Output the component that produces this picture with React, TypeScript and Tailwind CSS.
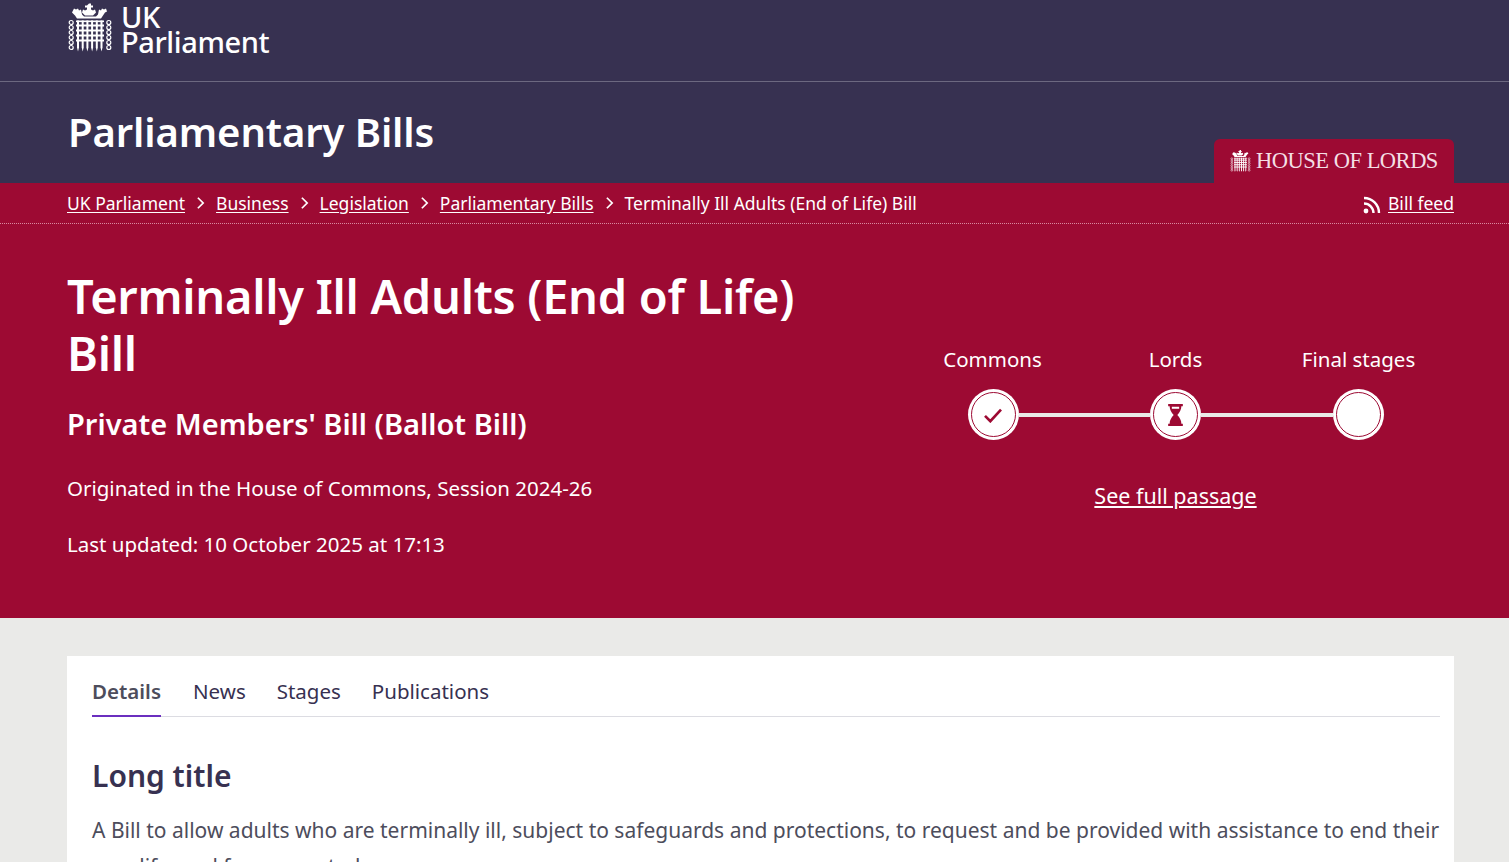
const portcullisBars = [0, 1, 2, 3, 4, 5];
function Logo({ className }: { className?: string }) {
  return (
    <svg viewBox="0 0 44 50" className={className} fill="#fff" aria-hidden="true">
      <path d="M21 0h2v2h2v2h-2v2l2 1 2-1 1 3-1 1-2 2h-8l-2-2-1-1 1-3 2 1 2-1V4h-2V2h2z" />
      <path d="M6 5l2 1 2-1 1 2 2-1 1 5 2 2h12l2-2 1-5 2 1 1-2 2 1 2-1 1 3-2 1-2 3-2 3H9l-2-3-3-3z" />
      <rect x="8" y="17" width="28" height="1.6" />
      <rect x="8" y="21" width="28" height="2" />
      <rect x="8" y="26" width="28" height="2" />
      <rect x="8" y="31" width="28" height="2" />
      <rect x="8" y="36" width="28" height="2" />
      {portcullisBars.map((i) => (
        <path key={i} d={`M${9 + i * 4.7} 17h2v27l-1 4-1-4z`} />
      ))}
      {[19, 24, 29, 34, 39, 44].map((y) => (
        <g key={y}>
          <circle cx="3.2" cy={y} r="2" fill="none" stroke="#fff" strokeWidth="1.2" />
          <circle cx="40.8" cy={y} r="2" fill="none" stroke="#fff" strokeWidth="1.2" />
        </g>
      ))}
    </svg>
  );
}

function Chevron() {
  return (
    <svg viewBox="0 0 10 16" className="w-[9px] h-[14px] mx-[11px] shrink-0" fill="none" stroke="#fff" strokeWidth="2">
      <path d="M2 2l6 6-6 6" />
    </svg>
  );
}

function Crumb({ children }: { children: string }) {
  return <a className="underline underline-offset-2">{children}</a>;
}

function Node({ children }: { children?: React.ReactNode }) {
  return (
    <div className="w-[51px] h-[51px] rounded-full bg-white p-[3px] shrink-0">
      <div className="w-full h-full rounded-full border border-[#9d0a33] flex items-center justify-center">
        {children}
      </div>
    </div>
  );
}

export default function App() {
  return (
    <div className="h-screen overflow-hidden bg-[#eaeae8] font-['Noto_Sans',sans-serif]">
      <header className="bg-[#373151] h-[82px] border-b border-[#6c6880]">
        <div className="pl-[68px] pt-[3px] flex items-start gap-[9px] text-white">
          <Logo className="w-[44px] h-[51px]" />
          <div className="pt-[2px] text-[29px] leading-[24.5px] font-medium tracking-[-0.4px]">
            <div>UK</div>
            <div>Parliament</div>
          </div>
        </div>
      </header>

      <div className="bg-[#373151] h-[101px] pl-[68px] pr-[55px] flex justify-between items-end">
        <h1 className="self-start mt-[24px] text-[40px] leading-[52px] font-semibold text-white tracking-[-0.1px]">
          Parliamentary Bills
        </h1>
        <div className="w-[240px] h-[44px] bg-[#9d0a33] rounded-t-[6px] flex items-center justify-center gap-[5px] text-[#f4dfe5]">
          <Logo className="w-[21px] h-[23px]" />
          <span className="font-['Liberation_Serif',serif] text-[22.5px] tracking-[-0.5px] leading-none">HOUSE OF LORDS</span>
        </div>
      </div>

      <nav className="bg-[#9d0a33] h-[41px] pl-[67px] pr-[55px] flex items-center justify-between border-b border-dotted border-[#d98aa0] text-white text-[17.5px] leading-[24px]">
        <div className="flex items-center">
          <Crumb>UK Parliament</Crumb>
          <Chevron />
          <Crumb>Business</Crumb>
          <Chevron />
          <Crumb>Legislation</Crumb>
          <Chevron />
          <Crumb>Parliamentary Bills</Crumb>
          <Chevron />
          <span>Terminally Ill Adults (End of Life) Bill</span>
        </div>
        <div className="flex items-center gap-[7px]">
          <svg viewBox="0 0 18 18" className="w-[18px] h-[18px] mt-[3px]" fill="none" stroke="#fff" strokeWidth="2.4">
            <circle cx="3" cy="15" r="2.4" fill="#fff" stroke="none" />
            <path d="M1 7.5a9.5 9.5 0 0 1 9.5 9.5" />
            <path d="M1 2a15 15 0 0 1 15 15" />
          </svg>
          <Crumb>Bill feed</Crumb>
        </div>
      </nav>

      <section className="bg-[#9d0a33] h-[394px] pl-[67px] pr-[55px] flex justify-between text-white">
        <div className="w-[780px] pt-[44px]">
          <h2 className="text-[47px] leading-[57px] font-semibold tracking-[-0.3px]">
            Terminally Ill Adults (End of Life) Bill
          </h2>
          <h3 className="mt-[22px] text-[29px] leading-[40px] font-semibold">Private Members' Bill (Ballot Bill)</h3>
          <p className="mt-[30px] text-[20.5px] leading-[28px]">Originated in the House of Commons, Session 2024-26</p>
          <p className="mt-[28px] text-[20.5px] leading-[28px]">Last updated: 10 October 2025 at 17:13</p>
        </div>
        <div className="w-[549px] mr-[4px] pt-[121px] flex flex-col items-center text-[20.5px] leading-[28px]">
          <div className="w-full grid grid-cols-3 text-center">
            <span>Commons</span>
            <span>Lords</span>
            <span>Final stages</span>
          </div>
          <div className="mt-[16px] w-[416px] flex items-center">
            <Node>
              <svg viewBox="0 0 22 18" className="w-[20px] h-[16px]" fill="none" stroke="#9d0a33" strokeWidth="3">
                <path d="M2 10l6 6L20 3" />
              </svg>
            </Node>
            <div className="flex-1 h-[4px] bg-[#eaeae8]" />
            <Node>
              <svg viewBox="0 0 18 24" className="w-[17px] h-[22px]" fill="#9d0a33">
                <path d="M1 0h16v2.5h-1.6c0 3.6-1.7 6.5-4.4 9.5 2.7 3 4.4 5.9 4.4 9.5H17V24H1v-2.5h1.6C2.600 17.900 4.300 15 7 12 4.300 9 2.600 6.100 2.600 2.500H1z" />
                <rect x="5" y="3" width="8" height="2.200" fill="#fff" />
              </svg>
            </Node>
            <div className="flex-1 h-[4px] bg-[#eaeae8]" />
            <Node />
          </div>
          <a className="mt-[42px] text-[21.5px] underline underline-offset-2">See full passage</a>
        </div>
      </section>

      <main className="mt-[38px] ml-[67px] mr-[55px] bg-white pl-[25px] pr-[14px] pt-[21px]">
        <div className="flex border-b border-[#dcdce2] text-[20.5px] leading-[28px] text-[#373151]">
          <a className="pb-[10px] font-semibold text-[#4d4d5c] border-b-2 border-[#6b2fbf] -mb-px">Details</a>
          <a className="ml-[32px]">News</a>
          <a className="ml-[31px]">Stages</a>
          <a className="ml-[31px]">Publications</a>
        </div>
        <h4 className="mt-[37px] text-[30px] leading-[44px] font-semibold text-[#373151]">Long title</h4>
        <p className="mt-[14px] text-[21px] leading-[36px] text-[#4d4d5c] pb-[20px]">
          A Bill to allow adults who are terminally ill, subject to safeguards and protections, to request and be provided with assistance to end their own life; and for connected purposes.
        </p>
      </main>
    </div>
  );
}
